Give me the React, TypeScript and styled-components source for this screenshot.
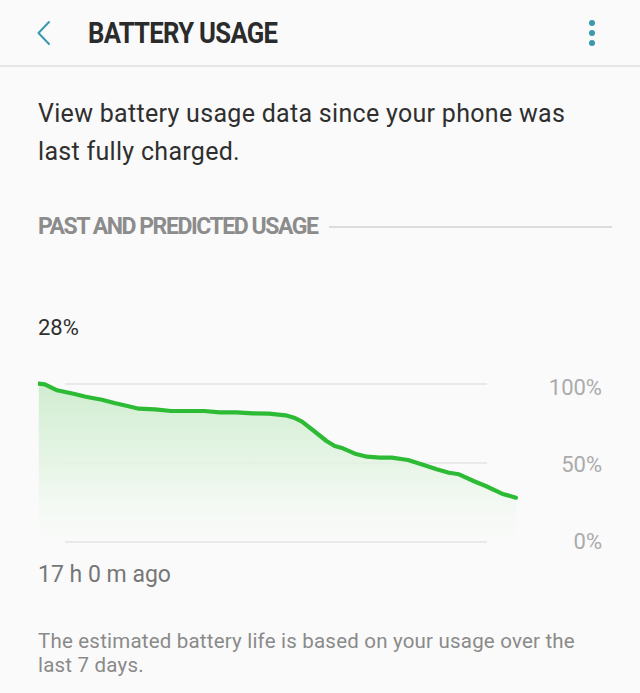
import React from "react";
import styled, { createGlobalStyle } from "styled-components";

const GlobalStyle = createGlobalStyle`
    html, body {
        margin: 0;
        padding: 0;
        background: #fafafa;
    }
    body {
        font-family: Roboto, "Noto Sans", sans-serif;
        -webkit-font-smoothing: antialiased;
    }
`;

const Page = styled.div`
    width: 640px;
    height: 693px;
    overflow: hidden;
    background: #fafafa;
`;

const Header = styled.header`
    display: flex;
    align-items: center;
    height: 67px;
    padding: 0 44px 0 36px;
    border-bottom: 2px solid #e6e6e6;
    box-sizing: border-box;
`;

const IconButton = styled.button`
    display: flex;
    align-items: center;
    justify-content: center;
    padding: 0;
    border: none;
    background: none;
    cursor: pointer;
`;

// condensed look of the system title font
const Title = styled.h1`
    flex: 1;
    margin: 0 0 0 36px;
    font-size: 30px;
    font-weight: 700;
    color: #2b2b2b;
    letter-spacing: -0.8px;
    transform: scaleX(0.855);
    transform-origin: left center;
    white-space: nowrap;
`;

const Content = styled.main`
    padding: 0 28px 0 38px;
`;

const Description = styled.p`
    margin: 28px 0 0;
    font-size: 25px;
    line-height: 38px;
    letter-spacing: 0.3px;
    color: #2f2f2f;
`;

const SectionHeader = styled.div`
    display: flex;
    align-items: center;
    gap: 12px;
    margin-top: 42px;
`;

const SectionTitle = styled.h2`
    margin: 0;
    font-size: 23px;
    font-weight: 700;
    color: #8c8c8c;
    letter-spacing: -1.45px;
    white-space: nowrap;
`;

const SectionLine = styled.div`
    flex: 1;
    height: 2px;
    background: #dcdcdc;
`;

const CurrentLevel = styled.div`
    margin-top: 75px;
    font-size: 22px;
    color: #2f2f2f;
`;

const ChartRow = styled.div`
    display: flex;
    margin-top: 36px;
`;

const ChartSvg = styled.svg`
    display: block;
    flex: none;
`;

const AxisLabels = styled.div`
    flex: 1;
    display: flex;
    flex-direction: column;
    align-items: flex-end;
    gap: 53px;
    padding-top: 0;
    padding-right: 10px;
`;

const AxisLabel = styled.span`
    font-size: 22px;
    line-height: 24px;
    color: #ababab;
`;

const TimeAgo = styled.div`
    margin-top: 7px;
    font-size: 23px;
    color: #777;
`;

const Footnote = styled.p`
    margin: 41px 20px 0 0;
    font-size: 20.5px;
    line-height: 24px;
    letter-spacing: 0.2px;
    color: #8a8a8a;
`;

// usage curve points, in page coordinates (x, y)
const usage: [number, number][] = [
    [38.8, 382.7], [44.9, 383.3], [57.1, 389.3], [73.5, 392.7], [85.7, 395.7],
    [102, 398.7], [114.3, 402], [126.5, 404.7], [138.8, 407.7], [155, 408.3],
    [171, 410], [204, 410], [220, 411.3], [236.7, 411.3], [253, 412.3],
    [269, 412.7], [285.7, 414.3], [294, 416.7], [302, 420.7], [314, 430],
    [326.5, 440], [334.7, 445], [342.9, 447.3], [355, 452.7], [367, 455.7],
    [379.6, 456.7], [391.8, 456.7], [408, 459], [424.5, 464.3], [436.7, 468.3],
    [449, 471.7], [459, 473.3], [473.5, 480], [485.7, 485], [502, 492.7],
    [516, 496.7],
];

const CHART_LEFT = 38;
const CHART_TOP = 375;
const CHART_W = 482;
const CHART_H = 170;

const UsageChart: React.FC = () => {
    const pts = usage.map(([x, y]) => [x - CHART_LEFT, y - CHART_TOP]);
    const line = pts.map(([x, y], i) => `${i === 0 ? "M" : "L"}${x.toFixed(1)} ${y.toFixed(1)}`).join(" ");
    const last = pts[pts.length - 1];
    const area = `${line} L${last[0].toFixed(1)} ${CHART_H - 8} L${pts[0][0].toFixed(1)} ${CHART_H - 8} Z`;
    const grid = [8, 87, 166];

    return (
        <ChartSvg width={CHART_W} height={CHART_H} viewBox={`0 0 ${CHART_W} ${CHART_H}`}>
            <defs>
                <linearGradient id="usageFill" x1="0" y1="0" x2="0" y2="1">
                    <stop offset="0%" stopColor="#cdeccd" stopOpacity="0.95" />
                    <stop offset="55%" stopColor="#e3f4e3" stopOpacity="0.8" />
                    <stop offset="100%" stopColor="#f4f9f4" stopOpacity="0.2" />
                </linearGradient>
            </defs>
            {grid.map((y) => (
                <line key={y} x1={27} x2={449} y1={y} y2={y} stroke="#e3e3e3" strokeWidth={1.5} />
            ))}
            <path d={area} fill="url(#usageFill)" />
            <path d={line} fill="none" stroke="#2dbb35" strokeWidth={4.2} strokeLinecap="round" strokeLinejoin="round" />
        </ChartSvg>
    );
};

const App: React.FC = () => {
    return (
        <Page>
            <GlobalStyle />
            <Header>
                <IconButton aria-label="Back">
                    <svg width="16" height="26" viewBox="0 0 16 26">
                        <path d="M13 2 L2.5 13 L13 24" fill="none" stroke="#3c98ad" strokeWidth="2" strokeLinecap="round" strokeLinejoin="round" />
                    </svg>
                </IconButton>
                <Title>BATTERY USAGE</Title>
                <IconButton aria-label="More options">
                    <svg width="8" height="28" viewBox="0 0 8 28">
                        <circle cx="4" cy="4" r="3" fill="#3c98ad" />
                        <circle cx="4" cy="14" r="3" fill="#3c98ad" />
                        <circle cx="4" cy="24" r="3" fill="#3c98ad" />
                    </svg>
                </IconButton>
            </Header>
            <Content>
                <Description>View battery usage data since your phone was last fully charged.</Description>
                <SectionHeader>
                    <SectionTitle>PAST AND PREDICTED USAGE</SectionTitle>
                    <SectionLine />
                </SectionHeader>
                <CurrentLevel>28%</CurrentLevel>
                <ChartRow>
                    <UsageChart />
                    <AxisLabels>
                        <AxisLabel>100%</AxisLabel>
                        <AxisLabel>50%</AxisLabel>
                        <AxisLabel>0%</AxisLabel>
                    </AxisLabels>
                </ChartRow>
                <TimeAgo>17 h 0 m ago</TimeAgo>
                <Footnote>The estimated battery life is based on your usage over the last 7 days.</Footnote>
            </Content>
        </Page>
    );
};

export default App;
